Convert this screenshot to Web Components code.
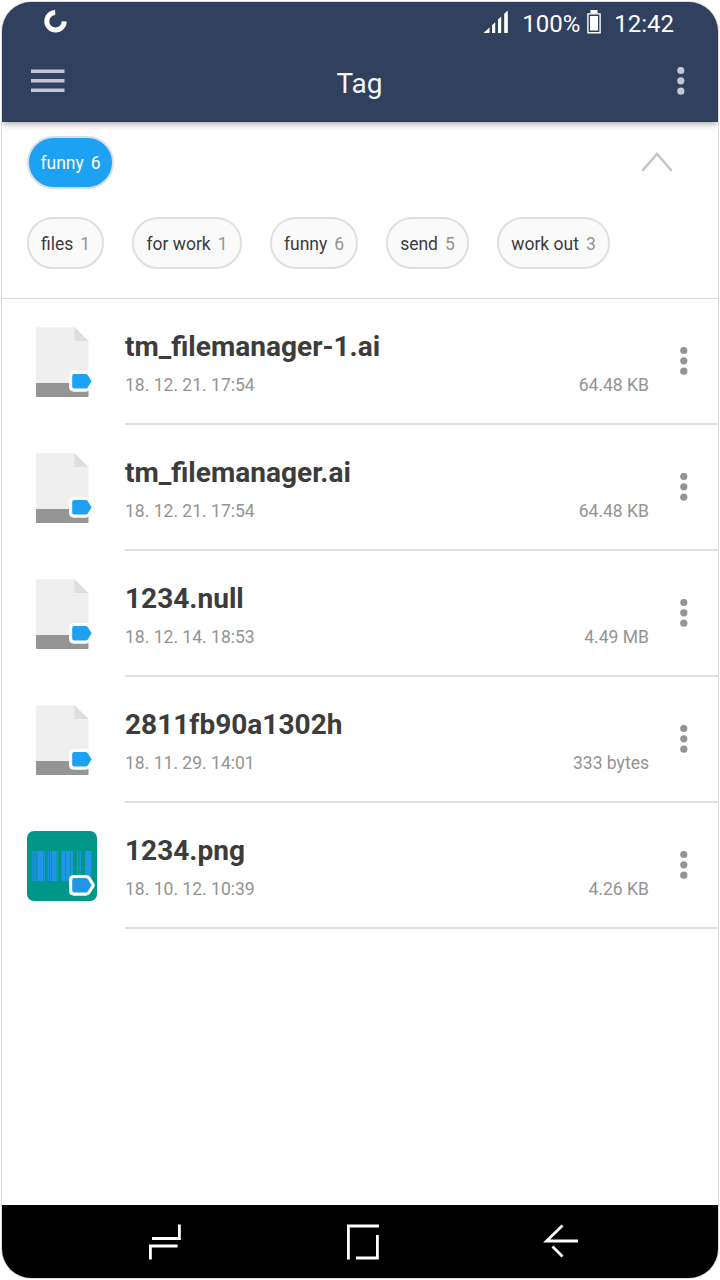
<!DOCTYPE html>
<html lang="en">
<head>
<meta charset="utf-8">
<title>Tag</title>
<style>
html,body{margin:0;background:#fff}
body{font-family:Roboto,"Noto Sans",sans-serif;width:720px;height:1280px;overflow:hidden}
</style>
</head>
<body>
<phone-frame>
  <status-bar slot="top" level="100%" time="12:42"></status-bar>
  <app-bar slot="top">Tag</app-bar>
  <tag-filter>
    <tag-chip slot="active" active count="6">funny</tag-chip>
    <tag-chip count="1" style="width:77px">files</tag-chip>
    <tag-chip count="1" style="width:110px">for work</tag-chip>
    <tag-chip count="6" style="width:88px">funny</tag-chip>
    <tag-chip count="5" style="width:83px">send</tag-chip>
    <tag-chip count="3" style="width:113px">work out</tag-chip>
  </tag-filter>
  <file-row date="18. 12. 21. 17:54" size="64.48 KB">tm_filemanager-1.ai</file-row>
  <file-row date="18. 12. 21. 17:54" size="64.48 KB">tm_filemanager.ai</file-row>
  <file-row date="18. 12. 14. 18:53" size="4.49 MB">1234.null</file-row>
  <file-row date="18. 11. 29. 14:01" size="333 bytes">2811fb90a1302h</file-row>
  <file-row kind="image" date="18. 10. 12. 10:39" size="4.26 KB">1234.png</file-row>
  <nav-bar slot="bottom"></nav-bar>
</phone-frame>
<script>
const define = (name, html, init) => customElements.define(name, class extends HTMLElement {
  connectedCallback() {
    if (this.shadowRoot) return;
    const t = document.createElement('template');
    t.innerHTML = html;
    this.attachShadow({mode: 'open'}).append(t.content.cloneNode(true));
    if (init) init(this, this.shadowRoot);
  }
});

define('more-dots', `<style>:host{display:block;width:8px;height:28px}svg{display:block}</style>
<svg width="8" height="28" fill="currentColor"><circle cx="3.8" cy="3.5" r="3.6"/><circle cx="3.8" cy="13.8" r="3.6"/><circle cx="3.8" cy="24.2" r="3.6"/></svg>`);

define('phone-frame', `<style>
:host{display:flex;flex-direction:column;box-sizing:border-box;width:718px;height:1278px;margin:1px;border:1px solid #dcdcdc;border-radius:30px;overflow:hidden;background:#fff}
header{background:#30405f;height:120px;box-shadow:0 1px 7px rgba(40,30,50,.5);position:relative;flex:none}
main{flex:1}
</style><header><slot name="top"></slot></header><main><slot></slot></main><slot name="bottom"></slot>`);

define('status-bar', `<style>
:host{display:flex;align-items:center;height:42px;color:#fff;font-size:24px;line-height:28px;padding:0 44px 0 42px}
svg{display:block;flex:none}
.sig{margin:0 14px 2px auto}.bat{margin:0 13px 3px 7px}.spin{margin-bottom:3px}
.t{padding-top:2px}
</style>
<svg class="spin" width="23" height="23" fill="none" stroke="#fff" stroke-width="5"><path d="M11.2 2.6A8.7 8.7 0 1 0 20.2 11.4"/></svg>
<svg class="sig" width="25" height="24" fill="#fff"><path d="M.5 23L6.5 17.5V23ZM9 23V15.2L12.2 12.3V23ZM15 23V9.5L18.2 6.6V23ZM21.2 23V3.7L24.8 .4V23Z"/></svg>
<span class="t l"></span>
<svg class="bat" width="14" height="24"><path d="M3.5 0h7v3.5h-7z" fill="#fff"/><path d="M.9 3.9h12.2v18.8H.9z" fill="none" stroke="#fff" stroke-width="1.4"/><path d="M3 6h8v14.6H3z" fill="#fff"/></svg>
<span class="t c"></span>`, (h, r) => {
  r.querySelector('.l').textContent = h.getAttribute('level');
  r.querySelector('.c').textContent = h.getAttribute('time');
});

define('app-bar', `<style>
:host{display:grid;grid-template-columns:1fr auto 1fr;align-items:center;height:78px;padding:0 33px 0 29px;color:#f4f5f8;font-size:28px;line-height:34px}
svg{display:block}more-dots{justify-self:end;color:#c1c7d5;margin-bottom:4px}
svg{margin-bottom:4px}.t{padding:2px 0 0 3px}
</style><svg width="34" height="26" fill="#c1c7d5"><path d="M0 1.5h33.5v3.4H0zM0 11h33.5v3.4H0zM0 20.6h33.5V24H0z"/></svg><span class="t"><slot></slot></span><more-dots></more-dots>`);

define('tag-filter', `<style>
:host{display:flex;flex-direction:column;height:177px;box-sizing:border-box;padding:14px 45px 0 25px;border-bottom:1px solid #d9d9d9}
.top{display:flex;justify-content:space-between;height:54px}
.list{display:flex;gap:28px;margin-top:27px}
svg{display:block;margin-top:15px}
</style><div class="top"><slot name="active"></slot><svg width="32" height="22" fill="none" stroke="#c5c6c9" stroke-width="2.6" stroke-linecap="round"><path d="M2 19L16 3L30 19"/></svg></div><div class="list"><slot></slot></div>`);

define('tag-chip', `<style>
:host{display:flex;align-items:center;justify-content:center;box-sizing:border-box;flex:none;height:52px;border:2px solid #dfdfdf;border-radius:26px;background:#fafafa;color:#3c3c3c;font-size:17.5px;line-height:20px;gap:7px;padding-top:1px;white-space:nowrap}
:host([active]){width:87px;height:53px;border-radius:27px;background:#1da1f2;color:#fff;border-color:#d5dfe8}
b{font-weight:400;color:#949494}:host([active]) b{color:inherit}
</style><span><slot></slot></span><b></b>`, (h, r) => r.querySelector('b').textContent = h.getAttribute('count'));

define('file-thumb', `<style>:host{display:block;width:70px;height:70px}svg{display:block}</style>
<svg width="70" height="70"></svg>`, (h, r) => {
  const bars = [[5.2,.8],[6.8,1],[8.6,1],[10.5,5.7],[16.8,1],[20.8,1],[23,1],[24.8,4.6],[29.8,1],[34.5,3.8],[39.1,4.2],[43.9,2],[50,1.1],[52.5,1.3],[58,6.5]];
  const image = h.getAttribute('kind') === 'image';
  const base = image
    ? '<rect width="70" height="70" rx="7" fill="#009688"/>' + bars.map(([x, w]) => `<rect x="${x}" y="20" width="${w}" height="30" fill="#2196e8"/>`).join('')
    : '<path d="M9 1.2Q9 .2 10 .2H47.5L61.5 14V56H9z" fill="#efefef"/><path d="M47.5.2L61.5 14H47.5z" fill="#dedede"/><path d="M9 56h52.5v13q0 1-1 1H10q-1 0-1-1z" fill="#959595"/>';
  const blue = image ? '#2196e8' : '#1da1f2';
  r.querySelector('svg').innerHTML = base + `<path d="M47.2 47.1H58.7Q60 47.1 60.8 48.2L64.6 54.3L60.8 60.4Q60 61.5 58.7 61.5H47.2Q45.2 61.5 45.2 59.5V49.1Q45.2 47.1 47.2 47.1Z" fill="${blue}" stroke="#fff" stroke-width="6.4" stroke-linejoin="round" paint-order="stroke"/>`;
});

define('file-row', `<style>
:host{display:grid;grid-template-columns:70px 1fr;column-gap:28px;padding-left:25px;height:126px}
file-thumb{margin-top:28px}
.body{display:grid;grid-template-columns:1fr 69px;border-bottom:2px solid #e0e0e0}
.text{display:flex;flex-direction:column;padding-top:31px}
.name{font-size:28.05px;line-height:34px;font-weight:700;color:#3c3c3c;white-space:nowrap}
.meta{display:flex;justify-content:space-between;font-size:17.55px;line-height:20px;color:#949494;margin-top:11px}
more-dots{color:#949494;margin:48px 0 0 31px}
</style><file-thumb></file-thumb><div class="body"><div class="text"><div class="name"><slot></slot></div><div class="meta"><span class="d"></span><span class="s"></span></div></div><more-dots></more-dots></div>`, (h, r) => {
  r.querySelector('.d').textContent = h.getAttribute('date');
  r.querySelector('.s').textContent = h.getAttribute('size');
  const old = r.querySelector('file-thumb');
  const thumb = document.createElement('file-thumb');
  thumb.setAttribute('kind', h.getAttribute('kind') || 'file');
  old.replaceWith(thumb);
});

define('nav-bar', `<style>
:host{display:flex;height:73px;background:#000;flex:none;padding-left:146px;align-items:flex-start}
svg{display:block;margin-top:18px;flex:none}
.h{margin-left:163px}.b{margin-left:163px}
</style>
<svg width="34" height="38" fill="none" stroke="#fff" stroke-width="2.8"><path d="M4 15.5H31.4V1.5M2.4 36.5V23H29.6"/></svg>
<svg class="h" width="34" height="38" fill="none" stroke="#fff" stroke-width="2.8"><path d="M34 3H3.4V36.5M32.4 12V35H11"/></svg>
<svg class="b" width="38" height="38" fill="none" stroke="#fff" stroke-width="2.8"><path d="M20.5 2.5L4.5 18H36M10.5 23.5L20.5 33.5"/></svg>`);
</script>
</body>
</html>
